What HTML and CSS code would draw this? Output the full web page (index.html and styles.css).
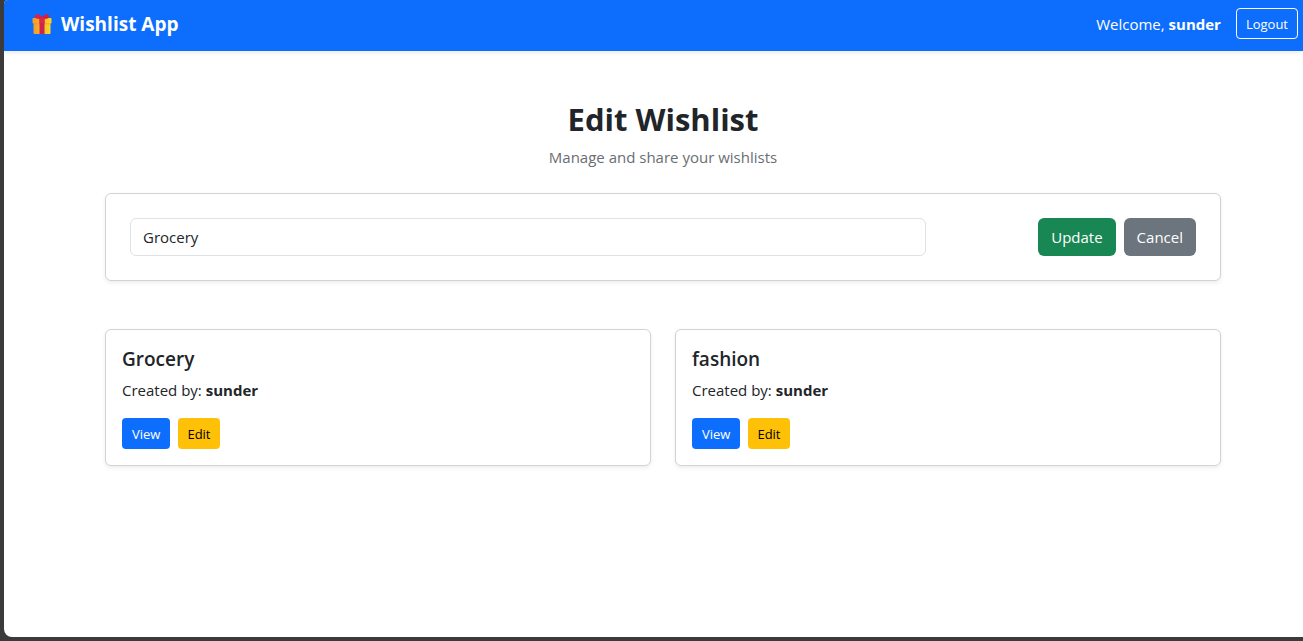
FILE: index.html
```html
<!DOCTYPE html>
<html lang="en">
<head>
<meta charset="utf-8">
<meta name="viewport" content="width=device-width, initial-scale=1">
<title>Wishlist App</title>
<link rel="stylesheet" href="styles.css">
</head>
<body>
<div class="page">
  <header class="navbar">
    <a class="brand" href="#">
      <svg class="brand-icon" viewBox="0 0 20 20" aria-hidden="true">
        <defs>
          <linearGradient id="box" x1="0" x2="1" y1="0" y2="0">
            <stop offset="0" stop-color="#f59a2c"/>
            <stop offset="1" stop-color="#fdd327"/>
          </linearGradient>
        </defs>
        <rect x="1.500" y="8" width="17" height="12" rx="1" fill="url(#box)"/>
        <rect x="0.500" y="4" width="19" height="5.500" rx="1" fill="url(#box)"/>
        <path d="M1.500 9.500H18.500V10.200H1.500Z" fill="#d98521" opacity=".6"/>
        <path d="M9.800 5C7 5.200 2.800 5 2.800 2.600 2.800 0 5.600-.4 7.400.7 8.800 1.600 9.600 3 9.800 5Z" fill="#e0203c"/>
        <path d="M10.200 5C13 5.200 17.200 5 17.200 2.600 17.200 0 14.400-.4 12.600.7 11.200 1.600 10.400 3 10.200 5Z" fill="#d81c40"/>
        <path d="M7.500 3.500Q10 1.200 12.500 3.500V20H7.500Z" fill="#c9254f"/>
        <path d="M7.500 4H12.500V9.500H7.500Z" fill="#dc2745"/>
      </svg>
      <span>Wishlist App</span>
    </a>
    <div class="session">
      <span>Welcome, <strong>sunder</strong></span>
      <button class="btn btn-sm btn-outline" type="button">Logout</button>
    </div>
  </header>
  <main class="content">
    <div class="heading">
      <h1>Edit Wishlist</h1>
      <p>Manage and share your wishlists</p>
    </div>
    <form class="card edit-form">
      <input class="name-field" type="text" value="Grocery" aria-label="Wishlist name">
      <div class="actions">
        <button class="btn btn-success" type="button">Update</button>
        <button class="btn btn-secondary" type="button">Cancel</button>
      </div>
    </form>
    <section class="wishlists" aria-label="Wishlists">
      <article class="card wishlist">
        <h2>Grocery</h2>
        <p>Created by: <strong>sunder</strong></p>
        <div class="actions">
          <a class="btn btn-sm btn-primary" href="#">View</a>
          <a class="btn btn-sm btn-warning" href="#">Edit</a>
        </div>
      </article>
      <article class="card wishlist">
        <h2>fashion</h2>
        <p>Created by: <strong>sunder</strong></p>
        <div class="actions">
          <a class="btn btn-sm btn-primary" href="#">View</a>
          <a class="btn btn-sm btn-warning" href="#">Edit</a>
        </div>
      </article>
    </section>
  </main>
</div>
</body>
</html>
```
FILE: styles.css
```css
*, *::before, *::after { box-sizing: border-box; }

body {
  margin: 0;
  min-height: 100vh;
  display: flex;
  padding: 0 0 4px 4px;
  background: #3b3b3b;
  color: #212529;
  font: 400 15px/24px "Segoe UI", "Open Sans", "Noto Sans", sans-serif;
}

h1, h2, p { margin: 0; }
strong { font-weight: 700; }

.page {
  flex: 1;
  background: #fff;
  border-radius: 4px 0 0 8px;
  overflow: hidden;
}

.navbar {
  display: flex;
  align-items: center;
  justify-content: space-between;
  padding: 8px 5px 12px 28px;
  background: #0d6efd;
  color: #fff;
  box-shadow: 0 2px 4px rgba(0, 0, 0, .075);
}

.brand {
  display: flex;
  align-items: center;
  gap: 9px;
  color: #fff;
  font-size: 19px;
  font-weight: 700;
  text-decoration: none;
}
.brand-icon { width: 20px; height: 20px; }

.session { display: flex; align-items: center; gap: 15px; }

.content { padding: 48px 82px 48px 101px; }

.heading { margin-bottom: 24px; text-align: center; }
.heading h1 { margin-bottom: 6px; font-size: 31px; line-height: 40px; font-weight: 700; }
.heading p { color: #6a6e72; }

.card {
  background: #fff;
  border: 1px solid #d2d3d4;
  border-radius: 6px;
  box-shadow: 0 2px 4px rgba(0, 0, 0, .075);
}

.edit-form {
  display: flex;
  justify-content: space-between;
  margin-bottom: 48px;
  padding: 24px;
}

.name-field {
  flex: 0 0 calc(75% - 4px);
  min-width: 0;
  height: 38px;
  padding: 6px 12px;
  border: 1px solid #dee2e6;
  border-radius: 6px;
  background: #fff;
  color: inherit;
  font: inherit;
}

.actions { display: flex; gap: 8px; }

.wishlists { display: grid; grid-template-columns: 1fr 1fr; gap: 24px; }
.wishlist { padding: 16px; }
.wishlist h2 { margin-bottom: 6px; font-size: 19px; line-height: 26px; font-weight: 600; }
.wishlist p { margin-bottom: 16px; }

.btn {
  padding: 6px 12px;
  border: 1px solid transparent;
  border-radius: 6px;
  color: #fff;
  font: inherit;
  text-align: center;
  text-decoration: none;
  cursor: pointer;
}
.btn-sm { padding: 5px 9px 3px; border-radius: 4px; font-size: 13px; line-height: 21px; }
.btn-outline { background: transparent; border-color: #fff; }
.btn-success { background: #198754; }
.btn-secondary { background: #6c757d; }
.btn-primary { background: #0d6efd; }
.btn-warning { padding-inline: 8px; background: #ffc107; color: #000; }
```
